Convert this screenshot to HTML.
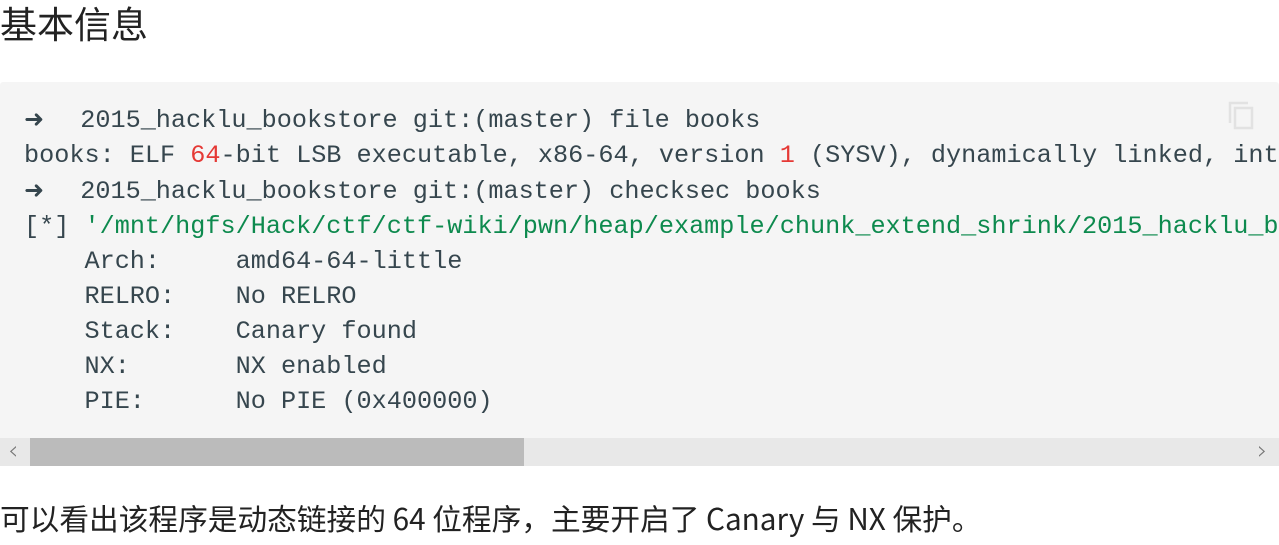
<!DOCTYPE html>
<html><head><meta charset="utf-8"><style>
body{margin:0;width:1279px;height:545px;overflow:hidden;background:#fff;font-family:"Noto Sans CJK SC",sans-serif;color:#222}
h2{position:absolute;left:0;top:-4px;margin:0;font-weight:400;font-size:37px;line-height:52px;color:#222}
.code{position:absolute;left:0;top:82px;width:1279px;height:356px;background:#f5f5f5;border-radius:3px 3px 0 0;overflow:hidden}
pre{margin:0;position:absolute;left:24px;top:20px;font-family:"Liberation Mono",monospace;font-size:25.2px;line-height:35px;color:#36464e;white-space:pre}
.a{display:inline-block;width:26px;font-weight:700;font-family:"DejaVu Sans",sans-serif;font-size:24px}
.r{color:#e53935}.g{color:#0d8a4e}
.sb{position:absolute;left:0;top:438px;width:1279px;height:28px;background:#e8e8e8}
.th{position:absolute;left:30px;top:0;width:494px;height:28px;background:#bbb}
.ar{position:absolute;top:-2px;font-size:26px;color:#777;font-family:"DejaVu Sans",sans-serif;font-weight:200}
p{position:absolute;left:0;top:496px;margin:0;font-size:29.7px;line-height:44px;color:#222;white-space:nowrap}
</style></head><body>
<h2>基本信息</h2>
<div class="code">
<svg style="position:absolute;left:1228px;top:19px" width="28" height="30" viewBox="0 0 28 30"><path d="M2 22V2h18" fill="none" stroke="#e2e2e2" stroke-width="2.5"/><rect x="7" y="7" width="17" height="20" fill="none" stroke="#e2e2e2" stroke-width="2.5"/></svg>
<pre><span class="a">➜</span>  2015_hacklu_bookstore git:(master) file books
books: ELF <span class="r">64</span>-bit LSB executable, x86-64, version <span class="r">1</span> (SYSV), dynamically linked, interpreter
<span class="a">➜</span>  2015_hacklu_bookstore git:(master) checksec books
[*] <span class="g">'/mnt/hgfs/Hack/ctf/ctf-wiki/pwn/heap/example/chunk_extend_shrink/2015_hacklu_bookstore/books'</span>
    Arch:     amd64-64-little
    RELRO:    No RELRO
    Stack:    Canary found
    NX:       NX enabled
    PIE:      No PIE (0x400000)</pre>
</div>
<div class="sb"><div class="th"></div><span class="ar" style="left:8px">‹</span><span class="ar" style="left:1257px">›</span></div>
<p>可以看出该程序是动态链接的 64 位程序，主要开启了 Canary 与 NX 保护。</p>
</body></html>
